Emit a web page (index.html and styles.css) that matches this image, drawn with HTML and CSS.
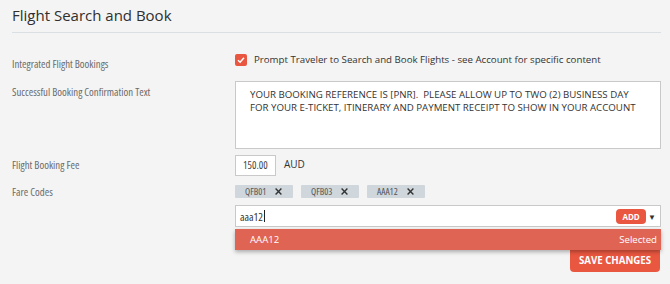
FILE: index.html
```html
<!DOCTYPE html>
<html lang="en">
<head>
  <meta charset="UTF-8" />
  <title>Flight Search and Book</title>
  <link rel="stylesheet" href="styles.css">
</head>
<body>
  <!-- ======= FLIGHT SETTINGS PANEL ======= -->
  <section class="panel">
    <h2 class="panel-title">Flight Search and Book</h2>

    <div class="row row-check">
      <div class="label">Integrated Flight Bookings</div>
      <label class="check">
        <span class="box">
          <svg width="8" height="8" viewBox="0 0 8 8"><path d="M1 4.2 L3.1 6.2 L7 1.8" fill="none" stroke="#fff" stroke-width="1.5"/></svg>
        </span>
        Prompt Traveler to Search and Book Flights - see Account for specific content
      </label>
    </div>

    <div class="row row-text">
      <div class="label">Successful Booking Confirmation Text</div>
      <div class="textarea">YOUR BOOKING REFERENCE IS [PNR].&nbsp; PLEASE ALLOW UP TO TWO (2) BUSINESS DAY<br>FOR YOUR E-TICKET, ITINERARY AND PAYMENT RECEIPT TO SHOW IN YOUR ACCOUNT</div>
    </div>

    <div class="row row-fee">
      <div class="label">Flight Booking Fee</div>
      <div class="fee">
        <span class="fee-input">150.00</span>
        <span class="currency">AUD</span>
      </div>
    </div>

    <div class="row row-tags">
      <div class="label">Fare Codes</div>
      <div class="tags">
        <span class="tag">QFB01 <svg class="x" width="7" height="7" viewBox="0 0 7 7"><path d="M.6 .6 6.4 6.4M6.4 .6 .6 6.4"/></svg></span>
        <span class="tag">QFB03 <svg class="x" width="7" height="7" viewBox="0 0 7 7"><path d="M.6 .6 6.4 6.4M6.4 .6 .6 6.4"/></svg></span>
        <span class="tag">AAA12 <svg class="x" width="7" height="7" viewBox="0 0 7 7"><path d="M.6 .6 6.4 6.4M6.4 .6 .6 6.4"/></svg></span>
      </div>
    </div>

    <div class="row row-combo">
      <div class="label"></div>
      <div class="combo">
        <div class="combo-input">
          <span class="typed">aaa12<i class="caret"></i></span>
          <span class="add">ADD</span>
          <span class="arrow">▼</span>
        </div>
        <div class="dropdown">
          <span>AAA12</span>
          <span>Selected</span>
        </div>
      </div>
    </div>

    <div class="actions">
      <button class="save">SAVE CHANGES</button>
    </div>
  </section>
</body>
</html>
```

FILE: styles.css
```css
:root {
  --red: #ea5740;
  --red-soft: #e06454;
  --text: #333;
  --muted: #6b6b6b;
}

*,*::before,*::after{box-sizing:border-box}

body {
  margin: 0;
  background: #f4f4f4;
  font-family: "Open Sans", "Noto Sans", sans-serif;
  color: var(--text);
}

/* ======= PANEL ======= */
.panel{padding:0 9px 0 12px}
.panel-title{margin:0;padding:7px 0 8px;font-size:15px;font-weight:400;line-height:17px;color:#2f2f2f;border-bottom:1px solid #dadfe4}

.row{display:grid;grid-template-columns:223px minmax(0,1fr);align-items:start}
/* labels hang beside the control without growing the row */
.label{font-stretch:condensed;font-size:10.8px;line-height:14px;color:var(--muted);margin-bottom:-30px}

/* Checkbox row */
.row-check{margin-top:21px}
.row-check .label{padding-top:3px}
.check{display:flex;align-items:center;gap:7px;font-size:9.7px;line-height:12px;white-space:nowrap;color:var(--text)}
.box{display:flex;align-items:center;justify-content:center;width:12px;height:12px;background:var(--red);border-radius:2px}

/* Textarea row */
.row-text{margin-top:15px}
.row-text .label{padding-top:4px}
.textarea{height:68px;background:#fff;border:1px solid #c9c9c9;padding:7px 10px 0 14px;font-size:9.7px;line-height:12.7px;white-space:nowrap;overflow:hidden;color:var(--text)}

/* Fee row */
.row-fee{margin-top:6px}
.row-fee .label{padding-top:3px}
.fee{display:flex;align-items:center;gap:8px}
.fee-input{width:41px;height:21px;background:#fff;border:1px solid #c9c9c9;padding-left:7px;font-stretch:condensed;font-size:10.5px;line-height:19px;color:#444}
.currency{font-size:10px;color:var(--text);margin-top:-4px}

/* Tags row */
.row-tags{margin-top:9px}
.tags{display:flex;gap:8px}
.tag{display:flex;align-items:center;gap:9px;width:58px;height:13px;padding:0 0 0 10px;background:#cfd6dc;border-radius:1px;font-stretch:condensed;font-size:9.5px;color:#555}
.x{stroke:#333;stroke-width:1.4;fill:none;flex:none}

/* Combo row */
.row-combo{margin-top:7px}
.combo{position:relative}
.combo-input{display:flex;align-items:center;height:22px;background:#fff;border:1px solid #c9c9c9;padding:0 4px}
.typed{flex:1;font-stretch:condensed;font-size:11px;color:var(--text);display:flex;align-items:center}
.caret{display:inline-block;width:1px;height:12px;background:#222;margin-left:1px}
.add{width:30px;height:15px;background:var(--red);border-radius:4px;color:#fff;font-size:8px;font-weight:700;text-align:center;line-height:15px}
.arrow{font-size:8px;color:#333;margin-left:2px;line-height:15px}
.dropdown{position:absolute;left:0;right:0;top:24px;height:21px;display:flex;align-items:center;justify-content:space-between;padding:0 4px 0 15px;background:var(--red-soft);color:#fff;font-size:9.6px;box-shadow:0 2px 4px rgba(0,0,0,.3);z-index:2}

/* Save */
.actions{display:flex;justify-content:flex-end;margin-top:19px;padding-right:1px}
.save{width:90px;height:26px;border:0;border-radius:4px;background:var(--red);color:#fff;font-family:inherit;font-size:9.7px;font-weight:700;padding:3px 0 0}
```
